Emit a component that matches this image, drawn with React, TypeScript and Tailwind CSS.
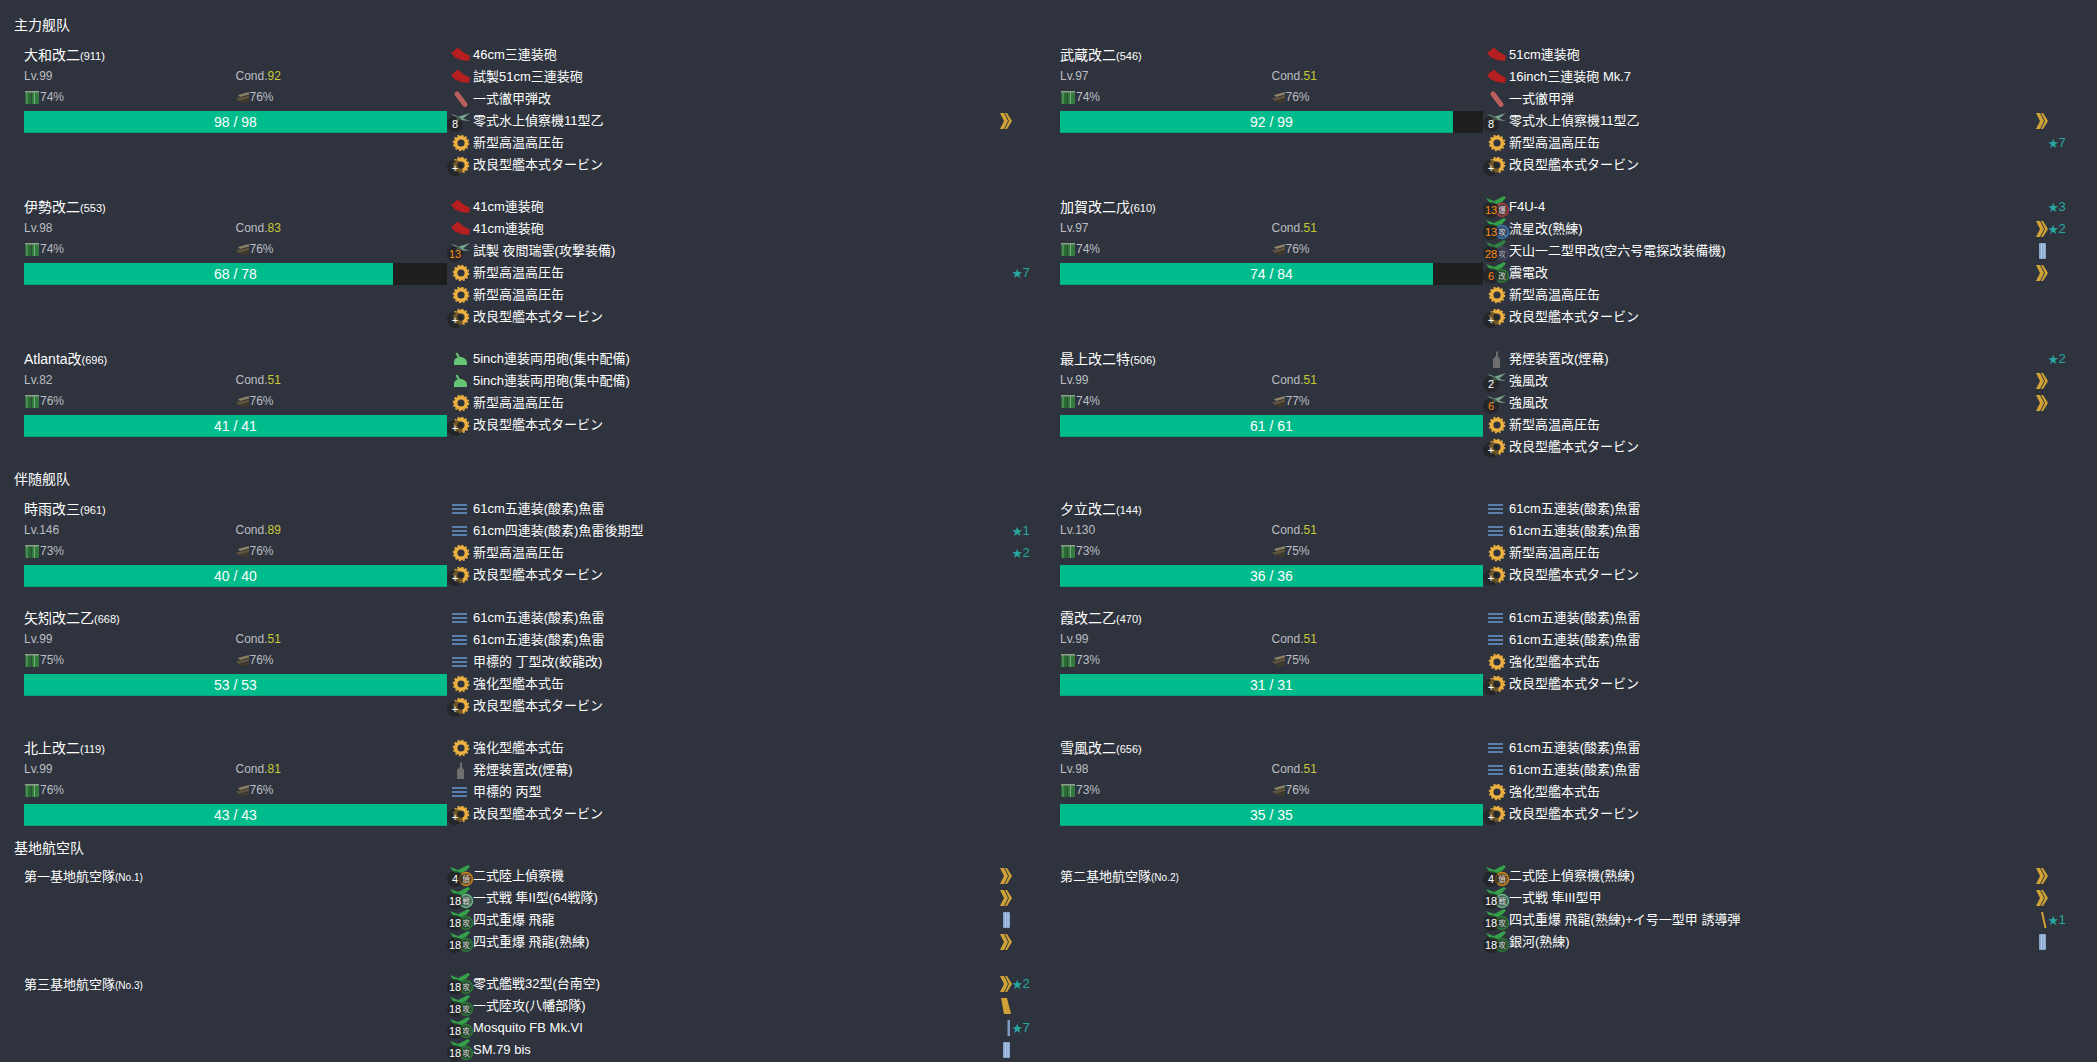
const FONT = "[font-family:'Liberation_Sans','Noto_Sans_CJK_SC',sans-serif]";

type IconName = "gun" | "shell" | "seaplane" | "gear" | "aa" | "torpedo" | "smoke" | "sea" | "plane";
type Alv = "chevron" | "pipe" | "thin" | "slash" | "bar";

type Slot = {
  name?: string;
  icon?: IconName;
  badge?: string;
  hot?: boolean;
  alv?: Alv;
  star?: number;
  hex?: string;
  mark?: string;
  dim?: boolean;
};

type Ship = {
  name: string;
  id: string;
  lv?: number;
  cond?: number;
  fuel?: number;
  ammo?: number;
  hp?: number;
  max?: number;
  slots: Slot[];
};

const GUN = (name: string): Slot => ({ name, icon: "gun" });
const BOILER: Slot = { name: "新型高温高圧缶", icon: "gear" };
const KANHON: Slot = { name: "強化型艦本式缶", icon: "gear" };
const TURBINE: Slot = { name: "改良型艦本式タービン", icon: "gear", badge: "+" };
const T5: Slot = { name: "61cm五連装(酸素)魚雷", icon: "torpedo" };
const SMOKE: Slot = { name: "発煙装置改(煙幕)", icon: "smoke" };
const SEA8: Slot = { name: "零式水上偵察機11型乙", icon: "sea", badge: "8", alv: "chevron" };
const AA: Slot = { name: "5inch連装両用砲(集中配備)", icon: "aa" };

const base = (name: string, alv: Alv, star?: number, hex = "#2b7a34", badge = "18", mark = "攻"): Slot => ({
  name,
  icon: "plane",
  badge,
  alv,
  star,
  hex,
  mark,
});

const MAIN: Ship[] = [
  {
    name: "大和改二", id: "(911)", lv: 99, cond: 92, fuel: 74, ammo: 76, hp: 98, max: 98,
    slots: [GUN("46cm三連装砲"), GUN("試製51cm三連装砲"), { name: "一式徹甲弾改", icon: "shell" }, SEA8, BOILER, TURBINE],
  },
  {
    name: "武蔵改二", id: "(546)", lv: 97, cond: 51, fuel: 74, ammo: 76, hp: 92, max: 99,
    slots: [GUN("51cm連装砲"), GUN("16inch三連装砲 Mk.7"), { name: "一式徹甲弾", icon: "shell" }, SEA8, { ...BOILER, star: 7 }, TURBINE],
  },
  {
    name: "伊勢改二", id: "(553)", lv: 98, cond: 83, fuel: 74, ammo: 76, hp: 68, max: 78,
    slots: [GUN("41cm連装砲"), GUN("41cm連装砲"), { name: "試製 夜間瑞雲(攻撃装備)", icon: "sea", badge: "13", hot: true }, { ...BOILER, star: 7 }, BOILER, TURBINE],
  },
  {
    name: "加賀改二戊", id: "(610)", lv: 97, cond: 51, fuel: 74, ammo: 76, hp: 74, max: 84,
    slots: [
      { name: "F4U-4", icon: "plane", badge: "13", hot: true, star: 3, hex: "#a8403f", mark: "爆" },
      { name: "流星改(熟練)", icon: "plane", badge: "13", hot: true, alv: "chevron", star: 2, hex: "#3b78b8", mark: "攻" },
      { name: "天山一二型甲改(空六号電探改装備機)", icon: "plane", badge: "28", hot: true, alv: "pipe", hex: "#4f4a72", mark: "攻", dim: true },
      { name: "震電改", icon: "plane", badge: "6", hot: true, alv: "chevron", hex: "#2b7a34", mark: "改" },
      BOILER,
      TURBINE,
    ],
  },
  {
    name: "Atlanta改", id: "(696)", lv: 82, cond: 51, fuel: 76, ammo: 76, hp: 41, max: 41,
    slots: [AA, AA, BOILER, TURBINE],
  },
  {
    name: "最上改二特", id: "(506)", lv: 99, cond: 51, fuel: 74, ammo: 77, hp: 61, max: 61,
    slots: [
      { ...SMOKE, star: 2 },
      { name: "強風改", icon: "seaplane", badge: "2", alv: "chevron" },
      { name: "強風改", icon: "seaplane", badge: "6", hot: true, alv: "chevron" },
      BOILER,
      TURBINE,
    ],
  },
];

const ESCORT: Ship[] = [
  {
    name: "時雨改三", id: "(961)", lv: 146, cond: 89, fuel: 73, ammo: 76, hp: 40, max: 40,
    slots: [T5, { name: "61cm四連装(酸素)魚雷後期型", icon: "torpedo", star: 1 }, { ...BOILER, star: 2 }, TURBINE],
  },
  {
    name: "夕立改二", id: "(144)", lv: 130, cond: 51, fuel: 73, ammo: 75, hp: 36, max: 36,
    slots: [T5, T5, BOILER, TURBINE],
  },
  {
    name: "矢矧改二乙", id: "(668)", lv: 99, cond: 51, fuel: 75, ammo: 76, hp: 53, max: 53,
    slots: [T5, T5, { name: "甲標的 丁型改(蛟龍改)", icon: "torpedo" }, KANHON, TURBINE],
  },
  {
    name: "霞改二乙", id: "(470)", lv: 99, cond: 51, fuel: 73, ammo: 75, hp: 31, max: 31,
    slots: [T5, T5, KANHON, TURBINE],
  },
  {
    name: "北上改二", id: "(119)", lv: 99, cond: 81, fuel: 76, ammo: 76, hp: 43, max: 43,
    slots: [KANHON, SMOKE, { name: "甲標的 丙型", icon: "torpedo" }, TURBINE],
  },
  {
    name: "雪風改二", id: "(656)", lv: 98, cond: 51, fuel: 73, ammo: 76, hp: 35, max: 35,
    slots: [T5, T5, KANHON, TURBINE],
  },
];

const BASES: Ship[] = [
  {
    name: "第一基地航空隊", id: "(No.1)",
    slots: [
      base("二式陸上偵察機", "chevron", undefined, "#c9851a", "4", "偵"),
      base("一式戦 隼II型(64戦隊)", "chevron", undefined, "#6fb98a", "18", "戦"),
      base("四式重爆 飛龍", "pipe"),
      base("四式重爆 飛龍(熟練)", "chevron"),
    ],
  },
  {
    name: "第二基地航空隊", id: "(No.2)",
    slots: [
      base("二式陸上偵察機(熟練)", "chevron", undefined, "#c9851a", "4", "偵"),
      base("一式戦 隼III型甲", "chevron", undefined, "#6fb98a", "18", "戦"),
      base("四式重爆 飛龍(熟練)+イ号一型甲 誘導弾", "slash", 1),
      base("銀河(熟練)", "pipe"),
    ],
  },
  {
    name: "第三基地航空隊", id: "(No.3)",
    slots: [
      base("零式艦戦32型(台南空)", "chevron", 2),
      base("一式陸攻(八幡部隊)", "bar"),
      base("Mosquito FB Mk.VI", "thin", 7),
      base("SM.79 bis", "pipe"),
    ],
  },
];

function SlotIcon({ slot }: { slot: Slot }) {
  const { icon } = slot;
  if (icon === "gun") {
    return (
      <svg width="25" height="22" viewBox="0 0 25 22" className="block">
        <path d="M4 9 11 3.5 16 8 23 12 22 17 14 16 8 13.5Z" fill="#b51f1f" />
      </svg>
    );
  }
  if (icon === "shell") {
    return (
      <svg width="25" height="22" viewBox="0 0 25 22" className="block">
        <path d="M10 6 18 16.5" stroke="#b9605f" strokeWidth="5" strokeLinecap="round" />
      </svg>
    );
  }
  if (icon === "sea" || icon === "seaplane") {
    return (
      <svg width="25" height="22" viewBox="0 0 25 22" className="block">
        <path d="M4 4 12 6.5 23 3 16 8.5 23 11 13 10 8 12 10 8Z" fill="#7aa58c" />
      </svg>
    );
  }
  if (icon === "gear") {
    return (
      <svg width="25" height="22" viewBox="0 0 25 22" className="block">
        <circle cx="14" cy="11" r="5.4" fill="none" stroke="#ecb040" strokeWidth="3.6" />
        <circle cx="14" cy="11" r="7.6" fill="none" stroke="#ecb040" strokeWidth="1.4" strokeDasharray="2 2" />
      </svg>
    );
  }
  if (icon === "aa") {
    return (
      <svg width="25" height="22" viewBox="0 0 25 22" className="block">
        <path d="M7 17V14C7 10.5 10 9 13 9 17 9 20 11.5 20 15V17Z" fill="#67c474" />
        <path d="M12 9.5 9.5 5" stroke="#67c474" strokeWidth="2.2" />
      </svg>
    );
  }
  if (icon === "torpedo") {
    return (
      <svg width="25" height="22" viewBox="0 0 25 22" className="block">
        <rect x="5" y="6" width="15" height="2" fill="#5c80ad" />
        <rect x="5" y="10" width="15" height="2" fill="#5c80ad" />
        <rect x="5" y="14" width="15" height="2" fill="#5c80ad" />
      </svg>
    );
  }
  if (icon === "smoke") {
    return (
      <svg width="25" height="22" viewBox="0 0 25 22" className="block">
        <path d="M10 20V11L13 8V4L15 3V8L17 11V20Z" fill="#6e6e6e" />
      </svg>
    );
  }
  if (icon === "plane") {
    return (
      <svg width="25" height="22" viewBox="0 0 25 22" className={`block overflow-visible ${slot.dim ? "opacity-70" : ""}`}>
        <path d="M3 2 11 5 21 0 23 1.5 19 6 14 8 7 7.5Z" fill="#35a04a" />
        <circle cx="19" cy="14" r="6.5" fill={slot.hex} fillOpacity="0.35" stroke={slot.hex} strokeWidth="1.4" />
        <text x="19" y="17" fontSize="7.5" textAnchor="middle" fill="#d7d7d7">
          {slot.mark}
        </text>
      </svg>
    );
  }
  return null;
}

function AlvMark({ alv }: { alv?: Alv }) {
  if (alv === "chevron") {
    return (
      <svg width="12" height="16" viewBox="0 0 12 16" className="block">
        <path d="M0 0H4L8 8 4 16H0L4 8Z" fill="#d0a236" />
        <path d="M5 0H7L12 8 7 16H5L9 8Z" fill="#d0a236" />
      </svg>
    );
  }
  if (alv === "pipe") {
    return (
      <svg width="12" height="16" viewBox="0 0 12 16" className="block">
        <rect x="3" y="0" width="7" height="16" rx="1" fill="#88a7d0" />
        <rect x="5" y="1" width="1" height="14" fill="#b5cae6" />
        <rect x="7.5" y="1" width="1" height="14" fill="#b5cae6" />
      </svg>
    );
  }
  if (alv === "thin") {
    return (
      <svg width="12" height="16" viewBox="0 0 12 16" className="block">
        <rect x="7.5" y="0" width="2.5" height="16" fill="#7f9cc4" />
      </svg>
    );
  }
  if (alv === "slash") {
    return (
      <svg width="12" height="16" viewBox="0 0 12 16" className="block">
        <path d="M5 0H7L10.5 16H8.5Z" fill="#d0a236" />
      </svg>
    );
  }
  if (alv === "bar") {
    return (
      <svg width="12" height="16" viewBox="0 0 12 16" className="block">
        <path d="M1 0H7L11 16H4Z" fill="#d0a236" />
      </svg>
    );
  }
  return null;
}

function SlotRow({ slot }: { slot: Slot }) {
  return (
    <div className="flex h-[22px] items-center">
      <div className="relative h-[22px] w-[26px] shrink-0">
        <SlotIcon slot={slot} />
        {slot.badge && (
          <span
            className={`absolute left-0 top-[6px] flex h-4 w-4 items-center justify-center rounded-full bg-[#1e1e1e]/60 text-[11px] leading-none ${
              slot.hot ? "text-[#ff8c10]" : "text-white"
            }`}
          >
            {slot.badge}
          </span>
        )}
      </div>
      <div className="min-w-0 flex-1 whitespace-nowrap text-[13px] leading-[22px] text-white">{slot.name}</div>
      <div className="w-3 shrink-0">
        <AlvMark alv={slot.alv} />
      </div>
      <div className="w-6 shrink-0 whitespace-nowrap text-[13px] leading-[22px] text-[#27a8a0]">
        {slot.star ? (
          <>
            <span className="text-[10.5px]">★</span>
            {slot.star}
          </>
        ) : null}
      </div>
    </div>
  );
}

function FuelIcon() {
  return (
    <svg width="16" height="16" viewBox="0 0 16 16" className="block">
      <rect x="1" y="2" width="6.5" height="13" rx="1" fill="#2a6a34" />
      <rect x="8" y="2" width="7" height="13" rx="1" fill="#347a3e" />
      <rect x="2.5" y="2" width="1" height="13" fill="#6aa872" />
      <rect x="10" y="2" width="1" height="13" fill="#74b07c" />
      <rect x="1" y="2" width="14" height="1.5" fill="#8f9f8c" />
    </svg>
  );
}

function AmmoIcon() {
  return (
    <svg width="14" height="16" viewBox="0 0 14 16" className="block">
      <path d="M2 6 13 3V5.5L4 8Z" fill="#8c8261" />
      <path d="M0 9.5 13 6.5V9L3 12Z" fill="#5f543b" />
      <path d="M4 12.5 13 10V13L7 14Z" fill="#453b29" />
    </svg>
  );
}

function ShipCard({ ship }: { ship: Ship }) {
  const pct = ship.max ? ((ship.hp ?? 0) / ship.max) * 100 : 0;
  return (
    <div className="flex pb-5 pl-[10px] pr-[14px]">
      <div className="w-[423px] shrink-0">
        <div
          className={`flex h-[21px] items-baseline whitespace-nowrap pt-[1px] leading-[21px] text-white ${
            ship.max ? "text-[14px]" : "text-[13px]"
          }`}
        >
          {ship.name}
          <span className={ship.max ? "text-[11px]" : "text-[10px]"}>{ship.id}</span>
        </div>
        {ship.max ? (
          <>
            <div className="grid h-[21px] grid-cols-2 items-center text-[12px] text-[#bcbec3]">
              <div>Lv.{ship.lv}</div>
              <div>
                Cond.<span className="text-[#c9c93a]">{ship.cond}</span>
              </div>
            </div>
            <div className="grid h-[22px] grid-cols-2 items-center text-[12px] text-[#bcbec3]">
              <div className="flex items-center">
                <FuelIcon />
                {ship.fuel}%
              </div>
              <div className="flex items-center">
                <AmmoIcon />
                {ship.ammo}%
              </div>
            </div>
            <div className="relative mt-[3px] h-[22px] bg-[#1e1e1e]">
              <div className="h-full border-b border-[#00a57b] bg-[#00bc8c]" style={{ width: `${pct}%` }} />
              <div className="absolute inset-0 flex items-center justify-center text-[14px] text-white">
                {ship.hp} / {ship.max}
              </div>
            </div>
          </>
        ) : null}
      </div>
      <div className="min-w-0 flex-1">
        {ship.slots.map((slot, i) => (
          <SlotRow key={i} slot={slot} />
        ))}
      </div>
    </div>
  );
}

function Section({ title, ships, className, titleGap }: { title: string; ships: Ship[]; className: string; titleGap: string }) {
  return (
    <section className={className}>
      <h2 className={`h-5 pl-[14px] text-[14px] font-normal leading-5 text-white ${titleGap}`}>{title}</h2>
      <div className="grid grid-cols-2 pl-[14px] pr-[11px]">
        {ships.map((ship) => (
          <ShipCard key={ship.id} ship={ship} />
        ))}
      </div>
    </section>
  );
}

export default function App() {
  return (
    <div className={`h-screen overflow-hidden bg-[#2e333d] pt-[15px] ${FONT}`}>
      <Section title="主力舰队" ships={MAIN} className="-mb-[9px]" titleGap="mb-[9px]" />
      <Section title="伴随舰队" ships={ESCORT} className="-mb-[8px]" titleGap="mb-[9px]" />
      <Section title="基地航空队" ships={BASES} className="" titleGap="mb-[7px]" />
    </div>
  );
}
